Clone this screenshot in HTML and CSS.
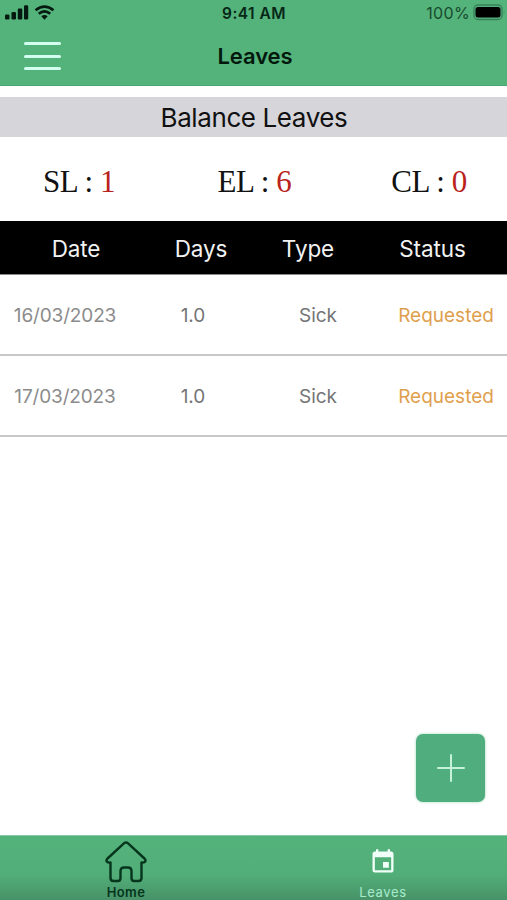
FILE: index.html
```html
<!DOCTYPE html>
<html lang="en">
<head>
<meta charset="utf-8">
<title>Leaves</title>
<link rel="stylesheet" href="styles.css">
</head>
<body>
<div class="app">
  <header class="top">
    <div class="status-bar">
      <div class="signals">
        <svg width="56" height="26" viewBox="0 0 56 26">
          <g fill="#04190f"><rect x="5" y="14.5" width="4.5" height="5" rx="1.2"/><rect x="11.5" y="12" width="4.5" height="7.5" rx="1.2"/><rect x="17.8" y="8.5" width="4.5" height="11" rx="1.2"/><rect x="24" y="5.3" width="4.2" height="14.2" rx="1.2"/><path d="M41.300 16.200 44.500 19.700 47.700 16.200Q44.500 14 41.300 16.200Z"/></g>
          <g fill="none" stroke="#04190f" stroke-width="2.700"><path d="M35.500 10.200Q44.500 3.200 53.500 10.200"/><path d="M38.800 13.800Q44.500 9 50.200 13.800"/></g>
        </svg>
      </div>
      <div class="time">9:41 AM</div>
      <div class="power"><span class="percent">100%</span>
        <svg width="37" height="26" viewBox="0 0 37 26">
          <rect x="4" y="5" width="28" height="14.500" rx="4" fill="none" stroke="#358158" stroke-width="1.300"/><rect x="5.500" y="7" width="25" height="10.500" rx="2.500" fill="#000"/><path d="M33.800 10.200q1.500 2 0 4.500z" fill="#358158"/>
        </svg>
      </div>
    </div>
    <div class="nav">
      <button class="menu" aria-label="Menu"><span></span><span></span><span></span></button>
      <h1>Leaves</h1>
    </div>
  </header>
  <main>
    <h2>Balance Leaves</h2>
    <section class="balances">
      <div>SL : <b>1</b></div><div>EL : <b>6</b></div><div>CL : <b>0</b></div>
    </section>
    <section>
      <div class="table-head"><span>Date</span><span>Days</span><span>Type</span><span>Status</span></div>
      <div class="row"><span>16/03/2023</span><span class="dark">1.0</span><span class="dark">Sick</span><span class="requested">Requested</span></div>
      <div class="row"><span>17/03/2023</span><span class="dark">1.0</span><span class="dark">Sick</span><span class="requested">Requested</span></div>
    </section>
    <button class="add" aria-label="Add leave">
      <svg width="28" height="28" viewBox="0 0 28 28"><path d="M14 1V27M1 14H27" stroke="#c6f2da" stroke-width="2" stroke-linecap="round"/></svg>
    </button>
  </main>
  <nav class="tabs">
    <div class="tab home">
      <svg width="44" height="44" viewBox="0 0 44 44"><path d="M20.200 3.200Q22 1.700 23.800 3.200L40.500 18.500Q42.200 20.300 41 21.800Q39.500 23 37.500 22.500V38Q37.500 41 34.500 41H30Q27.500 41 27.500 38V31Q27.500 27.500 24 27.500H20Q16.500 27.500 16.500 31V38Q16.500 41 14 41H9.500Q6.500 41 6.500 38V22.500Q4.500 23 3 21.800Q1.800 20.300 3.500 18.500Z" fill="none" stroke="#06351d" stroke-width="2.400" stroke-linejoin="round"/></svg>
      <span>Home</span>
    </div>
    <div class="tab leaves">
      <svg width="28" height="28" viewBox="0 0 24 24"><path fill="#f0fff8" d="M17 12h-5v5h5v-5zM16 1v2H8V1H6v2H5c-1.110 0-1.990.9-1.990 2L3 19a2 2 0 0 0 2 2h14c1.100 0 2-.9 2-2V5c0-1.100-.9-2-2-2h-1V1h-2zm3 18H5V8h14v11z"/></svg>
      <span>Leaves</span>
    </div>
  </nav>
</div>
</body>
</html>
```
FILE: styles.css
```css
* { box-sizing: border-box; }
body { margin: 0; background: #fff; font-family: Inter, "Liberation Sans", sans-serif; }
button { border: 0; padding: 0; }
svg { display: block; }
.app { width: 507px; height: 900px; display: flex; flex-direction: column; overflow: hidden; }
.top { height: 86px; background: #54b27b; border-bottom: 1px solid #4da473; }
.status-bar { height: 26px; display: grid; grid-template-columns: 1fr auto 1fr; align-items: center; color: #062716; }
.time { font-size: 15.5px; font-weight: 600; letter-spacing: .45px; padding-left: 1px; }
.power { display: flex; justify-content: flex-end; align-items: center; }
.percent { font-size: 16px; color: #174c2e; letter-spacing: .35px; }
.nav { height: 60px; display: grid; grid-template-columns: 1fr auto 1fr; align-items: center; }
.menu { width: 37px; height: 28px; margin-left: 24px; background: none; display: flex; flex-direction: column; justify-content: space-between; }
.menu span { height: 3px; width: 100%; border-radius: 2px; background: #d2fff0; }
h1 { margin: 0; padding-left: 3px; font-size: 22px; font-weight: 600; letter-spacing: -.1px; color: #03180c; }
main { flex: 1; display: flex; flex-direction: column; padding-top: 11px; }
h2 { margin: 0; height: 40px; line-height: 41px; background: #d6d5da; text-align: center; font-size: 26px; font-weight: 400; letter-spacing: -.4px; color: #111; padding-left: 1px; }
.balances { height: 84px; display: grid; grid-template-columns: 158px 193px 156px; align-items: center; text-align: center; font: 31px "Liberation Serif", serif; letter-spacing: -.4px; color: #111; padding-top: 5px; }
.balances b { font-weight: 400; color: #b9231c; }
.table-head { height: 53px; background: #000; color: #f2f2f2; display: grid; grid-template-columns: 152px 98px 116px 133px; align-items: center; text-align: center; font-size: 22.5px; letter-spacing: -.1px; padding-top: 1px; }
.row { height: 81px; border-bottom: 2px solid #c7c7c7; display: grid; grid-template-columns: 130px 126px 124px 132px; align-items: center; text-align: center; font-size: 19px; color: #8b8b8b; padding-top: 2px; }
.table-head + .row { height: 82px; border-top: 1px solid #8a8a8a; padding-top: 1px; }
.row > span:first-child { letter-spacing: -.15px; }
.row .dark { color: #747476; }
.row .requested { color: #dfa04e; }
.add { width: 69px; height: 68px; margin: auto 22px 33px auto; border-radius: 7px; background: #50ad7d; display: flex; align-items: center; justify-content: center; box-shadow: 0 0 3px #9cd6b8; }
.tabs { height: 65px; display: grid; grid-template-columns: 252px 262px; background: linear-gradient(#54b27b 0, #52ae78 60%, #479268 100%); border-top: 1px solid #84c6a0; }
.tab { display: flex; flex-direction: column; align-items: center; }
.tab span { font-size: 13px; line-height: 16px; }
.home svg { margin-top: 4px; }
.home span { font-weight: 600; color: #06351d; letter-spacing: .4px; }
.leaves svg { margin-top: 12px; }
.leaves span { margin-top: 8px; color: #a9ebcd; letter-spacing: .6px; }
```
